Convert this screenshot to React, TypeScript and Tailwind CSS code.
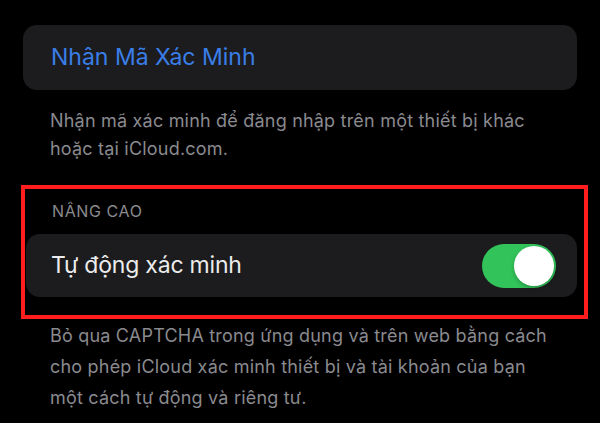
export default function App() {
  return (
    <div className="w-[600px] h-[423px] overflow-hidden bg-black pt-[25px] font-['Inter','Noto_Sans',sans-serif]">
      {/* Get verification code */}
      <div className="mx-[23px] h-[65px] rounded-[14px] bg-[#1c1c1e] flex items-center pl-[28px]">
        <span className="text-[23px] text-[#3a7ee8]">Nhận Mã Xác Minh</span>
      </div>
      <p className="pl-[50px] w-[550px] mt-[17px] text-[18px] leading-[28px] tracking-[0.2px] text-[#8a8a8f]">
        Nhận mã xác minh để đăng nhập trên một thiết bị khác hoặc tại iCloud.com.
      </p>

      {/* Highlighted advanced section */}
      <div className="ml-[21px] w-[567px] mt-[22px] border-4 border-[#ff1d1d] pb-[18px]">
        <div className="pl-[27px] pt-[13px] pb-[14px] text-[16px] leading-[18px] tracking-[0.6px] text-[#8a8a8f] uppercase">
          Nâng cao
        </div>
        <div className="ml-[1px] w-[551px] h-[63px] rounded-[14px] bg-[#1c1c1e] flex items-center justify-between pl-[25px] pr-[21px]">
          <span className="text-[23px] text-[#ececec] tracking-[-0.2px]">Tự động xác minh</span>
          <button
            aria-label="Tự động xác minh"
            aria-pressed={true}
            className="w-[74px] h-[44px] rounded-full bg-[#32c45a] flex items-center justify-end p-[2px]"
          >
            <span className="w-[40px] h-[40px] rounded-full bg-white shadow-[0_2px_4px_rgba(0,0,0,0.25)]" />
          </button>
        </div>
      </div>

      <p className="pl-[50px] w-[550px] mt-[1px] text-[18px] leading-[31px] tracking-[0.2px] text-[#8a8a8f]">
        Bỏ qua CAPTCHA trong ứng dụng và trên web bằng cách cho phép iCloud xác minh thiết bị và tài khoản của bạn một cách tự động và riêng tư.
      </p>
    </div>
  )
}
